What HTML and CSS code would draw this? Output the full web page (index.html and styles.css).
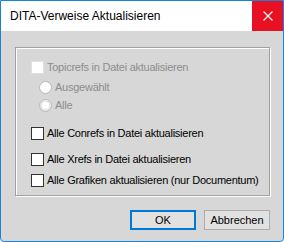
FILE: index.html
```html
<!DOCTYPE html>
<html lang="de">
<head>
    <meta charset="UTF-8">
    <title>DITA-Verweise Aktualisieren</title>
    <link rel="stylesheet" href="styles.css">
</head>
<body>
    <div class="window">
        <div class="titlebar">
            <span class="title">DITA-Verweise Aktualisieren</span>
            <div class="close">
                <svg width="10" height="10" viewBox="0 0 10 10">
                    <path d="M0.5 0.5 L9.5 9.5 M9.5 0.5 L0.5 9.5" stroke="#fff" stroke-width="1.1" fill="none"/>
                </svg>
            </div>
        </div>

        <div class="content">
            <div class="group">
                <div class="row disabled r-topic"><span class="check"></span>Topicrefs in Datei aktualisieren</div>
                <div class="row disabled sub r-sel"><span class="radio"></span>Ausgewählt</div>
                <div class="row disabled sub r-all"><span class="radio on"></span>Alle</div>
                <div class="row r-con"><span class="check"></span>Alle Conrefs in Datei aktualisieren</div>
                <div class="row r-xref"><span class="check"></span>Alle Xrefs in Datei aktualisieren</div>
                <div class="row r-graf"><span class="check"></span>Alle Grafiken aktualisieren (nur Documentum)</div>
            </div>

            <div class="buttons">
                <button class="btn default">OK</button>
                <button class="btn">Abbrechen</button>
            </div>
        </div>
    </div>
</body>
</html>
```

FILE: styles.css
```css
body {
    margin: 0;
    padding: 0;
    font-family: "Liberation Sans", Arial, sans-serif;
    font-size: 11px;
    color: #000;
}

.window {
    width: 284px;
    height: 242px;
    box-sizing: border-box;
    border: 1px solid #1883d7;
    border-radius: 0 0 4px 4px;
    background-color: #d7d7d7;
    display: flex;
    flex-direction: column;
    overflow: hidden;
}

/* Titelleiste */
.titlebar {
    height: 30px;
    background-color: #fff;
    display: flex;
    align-items: center;
    flex-shrink: 0;
}

.title {
    padding-left: 9px;
    font-family: "Liberation Sans", Arial, sans-serif;
    font-size: 12px;
    padding-bottom: 1px;
}

.close {
    margin-left: auto;
    width: 31px;
    height: 30px;
    background-color: #e81123;
    display: flex;
    justify-content: center;
    align-items: center;
}

.content {
    padding: 16px 13px 0 14px;
}

/* Gruppenrahmen */
.group {
    height: 149px;
    box-sizing: border-box;
    border: 1px solid #a0a0a0;
    box-shadow: inset 1px 1px 0 #fff, 1px 1px 0 #fff;
    padding: 13px 0 0 15px;
}

.row {
    height: 13px;
    display: flex;
    align-items: center;
    gap: 3px;
    line-height: 13px;
    white-space: nowrap;
    letter-spacing: -0.25px;
}

.row.disabled {
    color: #8d8d8d;
}

.row.sub {
    padding-left: 8px;
}

.r-sel { margin-top: 7px; }
.r-all { margin-top: 5px; }
.r-con { margin-top: 15px; }
.r-xref { margin-top: 13px; }
.r-graf { margin-top: 8px; }

.check {
    width: 13px;
    height: 13px;
    box-sizing: border-box;
    border: 1px solid #333;
    background-color: #fff;
    flex-shrink: 0;
}

.disabled .check {
    border-color: #e0e0e0;
}

.radio {
    width: 13px;
    height: 13px;
    box-sizing: border-box;
    border: 1px solid #b8b8b8;
    border-radius: 50%;
    background-color: #fff;
    flex-shrink: 0;
}

.radio.on {
    box-shadow: inset 0 0 0 2px #e6e6e6;
}

/* Schaltflächen */
.buttons {
    display: flex;
    justify-content: flex-end;
    gap: 8px;
    margin-top: 14px;
}

.btn {
    width: 66px;
    height: 20px;
    box-sizing: border-box;
    border: 1px solid #adadad;
    background-color: #e1e1e1;
    font-family: "Liberation Sans", Arial, sans-serif;
    font-size: 11px;
    color: #000;
    padding: 0;
}

.btn.default {
    border: 2px solid #0078d7;
}
```
